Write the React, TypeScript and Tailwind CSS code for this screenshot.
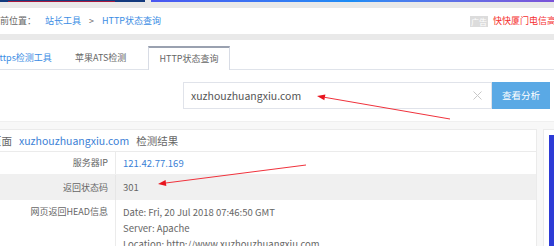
import React from "react";

const font = { fontFamily: '"Noto Sans CJK SC", "Noto Sans", sans-serif' };

function Arrow({ x1, y1, x2, y2 }: { x1: number; y1: number; x2: number; y2: number }) {
  const ang = Math.atan2(y2 - y1, x2 - x1);
  const L = 8;
  const W = 3;
  const bx = x2 - L * Math.cos(ang);
  const by = y2 - L * Math.sin(ang);
  const px = -Math.sin(ang) * W;
  const py = Math.cos(ang) * W;
  return (
    <g>
      <line x1={x1} y1={y1} x2={bx} y2={by} stroke="#f0323c" strokeWidth={1} />
      <polygon points={`${x2},${y2} ${bx + px},${by + py} ${bx - px},${by - py}`} fill="#e8141e" />
    </g>
  );
}

export default function App() {
  return (
    <div className="relative w-[554px] h-[246px] overflow-hidden bg-[#e9e9e9] flex flex-col" style={font}>
      {/* top strip */}
      <div className="h-[2px] flex shrink-0">
        <div className="w-[145px] h-full bg-[#133a7e] flex items-end pl-[8px]">
          <div className="w-[107px] h-[1px] bg-[#a8183e]" />
        </div>
        <div className="w-[6px] h-full bg-[#e9e9e9]" />
        <div className="flex-1 h-full bg-gradient-to-r from-[#4a56f0] via-[#1a8cf5] to-[#7a52d8]" />
      </div>
      <div className="h-[6px] shrink-0" />
      {/* breadcrumb */}
      <div className="h-[26px] shrink-0 bg-white flex items-center justify-between text-[9px] text-[#666]">
        <div className="flex items-center ml-[-9px]">
          <span>当前位置：</span>
          <span className="ml-[9px] text-[#3b8de4]">站长工具</span>
          <span className="ml-[8px]">&gt;</span>
          <span className="ml-[8px] text-[#3b8de4]">HTTP状态查询</span>
        </div>
        <div className="flex items-center mr-[-11px]">
          <span className="h-[11px] w-[18px] bg-[#dcdcdc] text-white text-[8px] leading-[11px] flex items-center justify-center">广告</span>
          <span className="ml-[5px] text-[#f53030] whitespace-nowrap">快快厦门电信高防</span>
        </div>
      </div>
      <div className="h-[6px] shrink-0" />
      {/* main */}
      <div className="flex-1 bg-white flex flex-col">
        {/* tabs */}
        <div className="h-[30px] shrink-0 border-b border-[#dfe3ea] flex items-end text-[9px] text-[#666]">
          <div className="h-[23px] flex items-center ml-[-6px] w-[81px] text-[#3b8de4]">https检测工具</div>
          <div className="h-[23px] flex items-center w-[73px]">苹果ATS检测</div>
          <div className="h-[24px] mb-[-1px] w-[82px] border-x border-[#d8dce5] border-t-[2px] border-t-[#9aa1b0] bg-white flex items-center justify-center">
            HTTP状态查询
          </div>
        </div>
        {/* search */}
        <div className="shrink-0 pt-[12px] pr-[4px] flex justify-end">
          <div className="w-[309px] h-[27px] border border-[#e0e3ea] flex items-center justify-between pl-[7px] pr-[9px] text-[10.5px] text-[#555]">
            <span>xuzhouzhuangxiu.com</span>
            <svg width="9" height="9" viewBox="0 0 9 9">
              <path d="M0.5 0.5 L8.5 8.5 M8.5 0.5 L0.5 8.5" stroke="#c8c8c8" strokeWidth="1" />
            </svg>
          </div>
          <div className="w-[58px] h-[27px] bg-[#5aa9e5] text-white text-[9.5px] flex items-center justify-center">查看分析</div>
        </div>
        <div className="h-[12px] shrink-0" />
        {/* results area */}
        <div className="flex-1 bg-[#f8f8f8] border-t border-[#f0f0f0] pt-[7px] flex">
          <div className="w-[537px] bg-white border-t border-r border-[#ebebeb] flex flex-col">
            <div className="h-[22px] border-b border-[#ebebeb] flex items-center text-[10.5px] text-[#666] ml-[-9px]">
              <span>页面</span>
              <span className="ml-[7px] text-[#3b7fd6]">xuzhouzhuangxiu.com</span>
              <span className="ml-[7px]">检测结果</span>
            </div>
            <div className="flex h-[23px] border-b border-[#f0f0f0]">
              <div className="w-[116px] border-r border-[#ebebeb] flex items-center justify-end pr-[7px] text-[9px] text-[#666]">服务器IP</div>
              <div className="flex items-center pl-[7px] text-[9.5px] text-[#3b7fd6]">121.42.77.169</div>
            </div>
            <div className="flex h-[25px] bg-[#f0f0f0]">
              <div className="w-[116px] border-r border-[#e6e6e6] flex items-center justify-end pr-[7px] text-[9px] text-[#666]">返回状态码</div>
              <div className="flex items-center pl-[7px] text-[9.5px] text-[#666]">301</div>
            </div>
            <div className="flex flex-1">
              <div className="w-[116px] border-r border-[#ebebeb] flex justify-end pr-[7px] pt-[4px] text-[9px] leading-[16px] text-[#666]">网页返回HEAD信息</div>
              <div className="flex flex-col pl-[7px] pt-[4px] text-[9.5px] leading-[16px] text-[#666] whitespace-nowrap">
                <span>Date: Fri, 20 Jul 2018 07:46:50 GMT</span>
                <span>Server: Apache</span>
                <span>Location: http://www.xuzhouzhuangxiu.com</span>
              </div>
            </div>
          </div>
          <div className="ml-[6px] flex-1 bg-white border-l border-t border-[#ebebeb] pl-[5px] pt-[5px]">
            <div className="h-full bg-[#2d3bd6]" />
          </div>
        </div>
      </div>
      {/* annotations */}
      <svg className="absolute inset-0 pointer-events-none" width="554" height="246">
        <Arrow x1={450} y1={119} x2={317} y2={96} />
        <Arrow x1={306} y1={165} x2={158} y2={184} />
      </svg>
    </div>
  );
}
